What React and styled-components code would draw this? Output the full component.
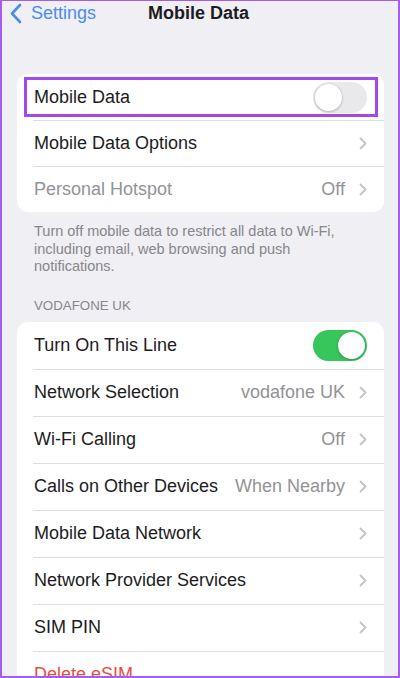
import React from "react";
import styled, { createGlobalStyle } from "styled-components";

const Global = createGlobalStyle`
  html, body { margin: 0; padding: 0; background: #f0eff4; }
  * { box-sizing: border-box; }
  body { font-family: "Liberation Sans", Arial, sans-serif; -webkit-font-smoothing: antialiased; }
`;

const Frame = styled.div`
  width: 400px;
  height: 678px;
  overflow: hidden;
  background: #f0eff4;
  border-style: solid;
  border-color: #a55cf2;
  border-width: 1px 2px 2px 2px;
  padding: 0 14px 0 15px;
`;

const NavBar = styled.div`
  position: relative;
  height: 24px;
  margin-left: -7px;
  display: flex;
  align-items: center;
`;

const Back = styled.div`
  display: flex;
  align-items: center;
  gap: 9px;
  color: #4a8cf0;
  font-size: 18px;
`;

const Title = styled.div`
  position: absolute;
  left: 0;
  right: 0;
  top: 0;
  height: 24px;
  line-height: 24px;
  text-align: center;
  font-size: 18px;
  font-weight: 700;
  color: #1c1c1e;
  pointer-events: none;
  padding-left: 3px;
`;

const Card = styled.div`
  background: #fff;
  border-radius: 11px;
  overflow: hidden;
  margin-top: ${(p) => p.$top}px;
`;

const Row = styled.div`
  position: relative;
  height: ${(p) => p.$h}px;
  display: flex;
  align-items: center;
  padding: 0 17px 0 17px;
  &:not(:first-child)::before {
    content: "";
    position: absolute;
    top: 0;
    left: 16px;
    right: 0;
    height: 1px;
    background: #dedee2;
  }
`;

const Label = styled.div`
  flex: 1;
  font-size: 18px;
  color: ${(p) => (p.$tone === "muted" ? "#939398" : p.$tone === "danger" ? "#ec4b3c" : "#1c1c1e")};
  white-space: nowrap;
`;

const Value = styled.div`
  font-size: 18px;
  color: #929297;
  margin-right: 14px;
  white-space: nowrap;
`;

const Highlight = styled.div`
  position: absolute;
  left: 7px;
  right: 6px;
  top: 3px;
  bottom: 3px;
  border: 3px solid #a148f0;
  pointer-events: none;
`;

const Track = styled.div`
  position: relative;
  width: 54px;
  height: 31px;
  border-radius: 16px;
  background: ${(p) => (p.$on ? "#36c65a" : "#e9e9eb")};
`;

const Knob = styled.div`
  position: absolute;
  top: 2px;
  left: ${(p) => (p.$on ? "25px" : "2px")};
  width: 27px;
  height: 27px;
  border-radius: 50%;
  background: #fff;
  box-shadow: 0 1px 3px rgba(0, 0, 0, 0.22), 0 0 0 0.5px rgba(0, 0, 0, 0.06);
`;

const Footer = styled.div`
  padding: 11px 16px 0 17px;
  font-size: 14.5px;
  line-height: 17.5px;
  color: #86868b;
`;

const SectionHeader = styled.div`
  margin-top: 22px;
  padding-left: 17px;
  font-size: 13.3px;
  color: #86868b;
  line-height: 16px;
`;

const Chevron = () => (
  <svg width="8" height="13" viewBox="0 0 8 13" fill="none">
    <path d="M1.5 1.5L6.5 6.5L1.5 11.5" stroke="#c3c3c8" strokeWidth="1.8" strokeLinecap="round" strokeLinejoin="round" />
  </svg>
);

const BackChevron = () => (
  <svg width="12" height="21" viewBox="0 0 12 21" fill="none">
    <path d="M10 2L2 10.5L10 19" stroke="#4a8cf0" strokeWidth="2.6" strokeLinecap="round" strokeLinejoin="round" />
  </svg>
);

const Switch = ({ on }) => (
  <Track $on={on}>
    <Knob $on={on} />
  </Track>
);

const lineRows = [
  { label: "Network Selection", value: "vodafone UK" },
  { label: "Wi-Fi Calling", value: "Off" },
  { label: "Calls on Other Devices", value: "When Nearby" },
  { label: "Mobile Data Network" },
  { label: "Network Provider Services" },
  { label: "SIM PIN" },
];

export default function App() {
  return (
    <>
      <Global />
      <Frame>
        <NavBar>
          <Back>
            <BackChevron />
            <span>Settings</span>
          </Back>
          <Title>Mobile Data</Title>
        </NavBar>

        <Card $top={49}>
          <Row $h={46}>
            <Label>Mobile Data</Label>
            <Switch on={false} />
            <Highlight />
          </Row>
          <Row $h={46}>
            <Label>Mobile Data Options</Label>
            <Chevron />
          </Row>
          <Row $h={46}>
            <Label $tone="muted">Personal Hotspot</Label>
            <Value>Off</Value>
            <Chevron />
          </Row>
        </Card>

        <Footer>
          Turn off mobile data to restrict all data to Wi-Fi, including email, web browsing and push
          notifications.
        </Footer>

        <SectionHeader>VODAFONE UK</SectionHeader>

        <Card $top={8}>
          <Row $h={47}>
            <Label>Turn On This Line</Label>
            <Switch on />
          </Row>
          {lineRows.map((r) => (
            <Row $h={47} key={r.label}>
              <Label>{r.label}</Label>
              {r.value && <Value>{r.value}</Value>}
              <Chevron />
            </Row>
          ))}
          <Row $h={47}>
            <Label $tone="danger">Delete eSIM</Label>
          </Row>
        </Card>
      </Frame>
    </>
  );
}
